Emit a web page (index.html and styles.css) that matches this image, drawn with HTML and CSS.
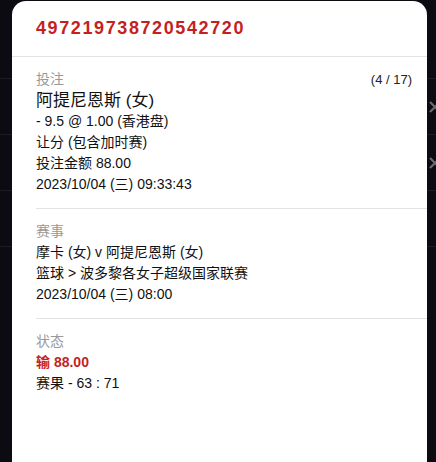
FILE: index.html
```html
<!DOCTYPE html>
<html lang="zh-CN">
<head>
  <meta charset="UTF-8">
  <meta name="viewport" content="width=device-width, initial-scale=1.0">
  <title>注单详情</title>
  <link rel="stylesheet" href="styles.css">
</head>
<body>
  <div class="backdrop">
    <div class="bg-row">
      <svg class="bg-x" width="14" height="14" viewBox="0 0 14 14"><path d="M2 2 L12 12 M12 2 L2 12" stroke="#6a6a70" stroke-width="2.2" fill="none"/></svg>
    </div>
    <div class="bg-row">
      <svg class="bg-x" width="14" height="14" viewBox="0 0 14 14"><path d="M2 2 L12 12 M12 2 L2 12" stroke="#6a6a70" stroke-width="2.2" fill="none"/></svg>
    </div>
    <div class="bg-row"></div>
    <div class="bg-row"></div>
  </div>

  <div class="modal">
    <div class="modal-header">
      <h1 class="ticket-id">497219738720542720</h1>
    </div>

    <div class="section">
      <div class="section-top">
        <div class="label">投注</div>
        <div class="counter">(4 / 17)</div>
      </div>
      <div class="selection">阿提尼恩斯 (女)</div>
      <div class="line">- 9.5 @ 1.00 (香港盘)</div>
      <div class="line">让分 (包含加时赛)</div>
      <div class="line">投注金额 88.00</div>
      <div class="line">2023/10/04 (三) 09:33:43</div>
    </div>

    <div class="section">
      <div class="label">赛事</div>
      <div class="line">摩卡 (女) v 阿提尼恩斯 (女)</div>
      <div class="line">篮球 &gt; 波多黎各女子超级国家联赛</div>
      <div class="line">2023/10/04 (三) 08:00</div>
    </div>

    <div class="section last">
      <div class="label">状态</div>
      <div class="line lost">输 88.00</div>
      <div class="line">赛果 - 63 : 71</div>
    </div>
  </div>
</body>
</html>
```

FILE: styles.css
```css
body {
  margin: 0;
  padding: 0;
  width: 436px;
  height: 462px;
  overflow: hidden;
  background-color: #0b0b11;
  font-family: "Liberation Sans", Arial, "Noto Sans CJK SC", sans-serif;
  position: relative;
}

/* page behind the popup, only its right edge shows */
.backdrop {
  padding-top: 78px;
}
.bg-row {
  height: 55px;
  border-top: 1px solid #1c1c24;
  display: flex;
  justify-content: flex-end;
  align-items: center;
}
.bg-x {
  margin-right: -6px;
}

.modal {
  position: absolute;
  top: 1px;
  left: 12px;
  width: 415px;
  height: 480px;
  background-color: #fff;
  border-radius: 14px 14px 0 0;
}
.modal-header {
  height: 55px;
  border-bottom: 1px solid #e2e2e2;
  display: flex;
  align-items: center;
  padding-left: 24px;
}
.ticket-id {
  margin: 0;
  font-size: 18px;
  font-weight: bold;
  letter-spacing: 1.6px;
  color: #c51f1f;
}

.section {
  margin-left: 24px;
  padding: 12px 15px 13px 0;
  border-bottom: 1px solid #e2e2e2;
  font-size: 14px;
  line-height: 21px;
  color: #111;
}
.section.last {
  border-bottom: none;
}
.section-top {
  display: flex;
  justify-content: space-between;
}
.label {
  color: #999;
}
.counter {
  font-size: 13px;
  color: #222;
}
.selection {
  font-size: 17px;
  line-height: 21px;
}
.lost {
  color: #c51f1f;
  font-weight: bold;
}
```
